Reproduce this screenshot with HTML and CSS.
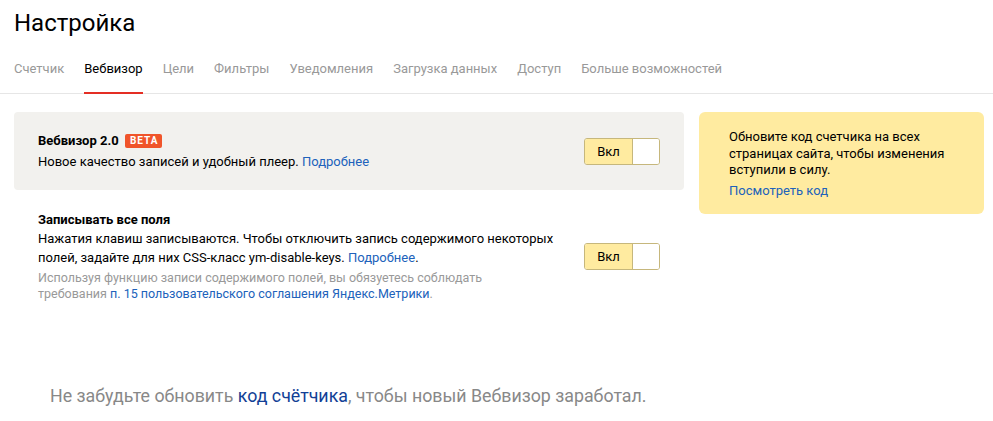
FILE: index.html
```html
<!DOCTYPE html>
<html lang="ru">
<head>
  <meta charset="UTF-8">
  <title>Настройка</title>
  <link rel="stylesheet" href="styles.css">
</head>
<body>
<div class="page">
  <h1 class="title">Настройка</h1>
  <div class="tabs">
    <a class="tab">Счетчик</a>
    <a class="tab active">Вебвизор</a>
    <a class="tab">Цели</a>
    <a class="tab">Фильтры</a>
    <a class="tab">Уведомления</a>
    <a class="tab">Загрузка данных</a>
    <a class="tab">Доступ</a>
    <a class="tab">Больше возможностей</a>
  </div>

  <div class="content">
    <div class="settings">
      <!-- Вебвизор 2.0 -->
      <div class="option option-grey">
        <div class="option-text">
          <div class="option-title">Вебвизор 2.0 <span class="beta">BETA</span></div>
          <div class="option-desc">Новое качество записей и удобный плеер. <a class="link">Подробнее</a></div>
        </div>
        <div class="switch">
          <span class="switch-on">Вкл</span><span class="switch-knob"></span>
        </div>
      </div>

      <!-- Записывать все поля -->
      <div class="option">
        <div class="option-text">
          <div class="option-title">Записывать все поля</div>
          <div class="option-desc">Нажатия клавиш записываются. Чтобы отключить запись содержимого некоторых полей, задайте для них CSS-класс ym-disable-keys. <a class="link">Подробнее</a>.</div>
          <div class="option-note">Используя функцию записи содержимого полей, вы обязуетесь соблюдать требования <a class="link">п. 15 пользовательского соглашения Яндекс.Метрики</a>.</div>
        </div>
        <div class="switch">
          <span class="switch-on">Вкл</span><span class="switch-knob"></span>
        </div>
      </div>
    </div>

    <div class="notice">
      <p>Обновите код счетчика на всех страницах сайта, чтобы изменения вступили в силу.</p>
      <a class="link">Посмотреть код</a>
    </div>
  </div>

  <p class="reminder">Не забудьте обновить <a class="link-dark">код счётчика</a>, чтобы новый Вебвизор заработал.</p>
</div>
</body>
</html>
```

FILE: styles.css
```css
*{margin: 0;padding: 0;box-sizing: border-box;}
body{
  font-family: Roboto, "Noto Sans", sans-serif;
  color: #000;
  background: #fff;
}

/* заголовок */
.title{
  font-size: 24px;
  font-weight: normal;
  line-height: 30px;
  padding: 8px 14px 0;
}

/* вкладки */
.tabs{
  display: flex;
  gap: 20px;
  padding: 0 14px;
  margin-top: 15px;
  border-bottom: 1px solid #e6e6e6;
}
.tab{
  font-size: 13px;
  line-height: 20px;
  color: #999;
  padding: 6px 0 13px;
  border-bottom: 2px solid transparent;
  margin-bottom: -1px;
}
.tab.active{
  color: #000;
  border-bottom-color: #e42e24;
}

/* контент */
.content{
  display: flex;
  gap: 15px;
  padding: 18px 9px 0 14px;
  align-items: flex-start;
}
.settings{
  width: 670px;
}
.option{
  display: flex;
  align-items: center;
  padding: 20px 24px 17px;
  font-size: 13px;
  line-height: 19px;
}
.option-grey{
  background: #f2f1ee;
  border-radius: 4px;
  padding: 19px 24px 19px;
}
.option-grey .option-title{
  margin-bottom: 2px;
}
.option-text{
  flex: 1;
  padding-right: 20px;
}
.option-title{
  font-weight: bold;
}
.beta{
  display: inline-block;
  background: #f0542a;
  color: #fff;
  font-size: 10px;
  line-height: 14px;
  letter-spacing: 1px;
  padding: 0 4px 0 5px;
  border-radius: 2px;
  margin-left: 3px;
  vertical-align: 1px;
}
.option-note{
  max-width: 470px;
  color: #999;
  font-size: 12.5px;
  line-height: 16px;
  margin-top: 3px;
}
.link{
  color: #2062bb;
  text-decoration: none;
}

/* переключатель */
.switch{
  display: flex;
  width: 76px;
  height: 27px;
  border: 1px solid #c6b77c;
  border-radius: 3px;
  overflow: hidden;
}
.switch-on{
  width: 48px;
  background: #ffeba0;
  border-right: 1px solid #c6b77c;
  font-size: 13px;
  line-height: 25px;
  text-align: center;
}
.switch-knob{
  flex: 1;
  background: #fff;
}

/* уведомление */
.notice{
  width: 285px;
  background: #ffeba0;
  border-radius: 6px;
  padding: 17px 20px 15px 30px;
  font-size: 13px;
  line-height: 16.5px;
}
.notice p{
  margin-bottom: 4px;
}

.reminder{
  font-size: 17.8px;
  color: #888;
  padding: 66px 50px 0;
}
.link-dark{
  color: #123f96;
  text-decoration: none;
}
```
